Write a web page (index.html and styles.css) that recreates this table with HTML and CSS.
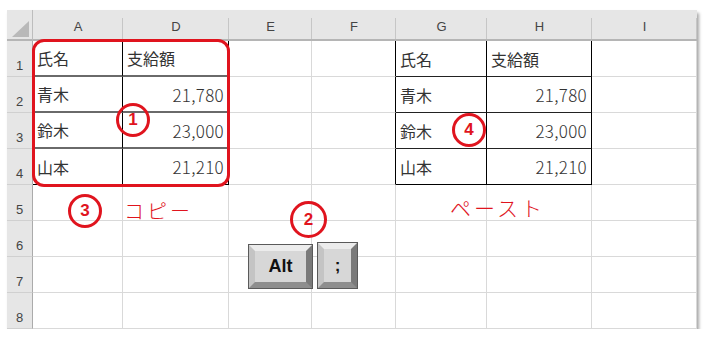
FILE: index.html
```html
<!DOCTYPE html>
<html lang="ja">
<head>
<meta charset="utf-8">
<title>Excel paste</title>
<link rel="stylesheet" href="styles.css">
</head>
<body>
<div class="sheet">
  <div class="grid">
    <div class="corner"><svg class="tri" width="18" height="17" viewBox="0 0 18 17"><polygon points="17,0 17,16 0,16" fill="#b9b9b9"/></svg></div>
    <div class="ch">A</div><div class="ch">D</div><div class="ch">E</div><div class="ch">F</div><div class="ch">G</div><div class="ch">H</div><div class="ch">I</div>

    <div class="rh">1</div>
    <div class="c la lmid">氏名</div><div class="c ld lmid">支給額</div><div class="c"></div><div class="c rf"></div><div class="c rg rmid">氏名</div><div class="c rh2 rmid">支給額</div><div class="c"></div>

    <div class="rh">2</div>
    <div class="c la lmid">青木</div><div class="c ld lmid num">21,780</div><div class="c"></div><div class="c rf"></div><div class="c rg rmid">青木</div><div class="c rh2 rmid num">21,780</div><div class="c"></div>

    <div class="rh">3</div>
    <div class="c la lmid">鈴木</div><div class="c ld lmid num">23,000</div><div class="c"></div><div class="c rf"></div><div class="c rg rmid">鈴木</div><div class="c rh2 rmid num">23,000</div><div class="c"></div>

    <div class="rh">4</div>
    <div class="c la lend">山本</div><div class="c ld lend num">21,210</div><div class="c"></div><div class="c rf"></div><div class="c rg rend">山本</div><div class="c rh2 rend num">21,210</div><div class="c"></div>

    <div class="rh">5</div>
    <div class="c"></div><div class="c"></div><div class="c"></div><div class="c"></div><div class="c"></div><div class="c"></div><div class="c"></div>
    <div class="rh">6</div>
    <div class="c"></div><div class="c"></div><div class="c"></div><div class="c"></div><div class="c"></div><div class="c"></div><div class="c"></div>
    <div class="rh">7</div>
    <div class="c"></div><div class="c"></div><div class="c"></div><div class="c"></div><div class="c"></div><div class="c"></div><div class="c"></div>
    <div class="rh">8</div>
    <div class="c"></div><div class="c"></div><div class="c"></div><div class="c"></div><div class="c"></div><div class="c"></div><div class="c"></div>
  </div>

  <div class="sel"></div>
  <div class="badge b1">1</div>
  <div class="badge b2">2</div>
  <div class="badge b3">3</div>
  <div class="badge b4">4</div>
  <div class="label copy">コピー</div>
  <div class="label paste">ペースト</div>
  <div class="key alt">Alt</div>
  <div class="key semi">;</div>
</div>
</body>
</html>
```

FILE: styles.css
```css
html, body {
  margin: 0;
  padding: 0;
  background: #ffffff;
}

.sheet {
  position: relative;
  margin: 10px 0 0 7px;
  width: 690px;
  height: 319px;
  box-shadow: 2px 3px 3px rgba(0, 0, 0, 0.35);
}

.grid {
  display: grid;
  grid-template-columns: 26px 90px 106px 83px 84px 91px 105px 105px;
  grid-template-rows: 31px repeat(8, 36px);
  background: #ffffff;
}

.grid > div {
  box-sizing: border-box;
}

.corner {
  position: relative;
  background: #e6e6e6;
  border-right: 1px solid #bdbdbd;
  border-bottom: 2px solid #b5b5b5;
}

.tri {
  position: absolute;
  right: 2px;
  bottom: 1px;
}

.ch {
  position: relative;
  background: #e6e6e6;
  border-bottom: 2px solid #b5b5b5;
  font-family: "Liberation Sans", Arial, sans-serif;
  font-size: 13px;
  color: #444;
  display: flex;
  align-items: center;
  justify-content: center;
  padding-top: 4px;
}

.ch::after {
  content: "";
  position: absolute;
  right: 0;
  top: 8px;
  bottom: 0;
  width: 1px;
  background: #c6c6c6;
}

.rh {
  background: #e6e6e6;
  border-right: 1px solid #ababab;
  border-bottom: 1px solid #d0d0d0;
  font-family: "Liberation Sans", Arial, sans-serif;
  font-size: 13px;
  color: #444;
  display: flex;
  align-items: flex-end;
  justify-content: center;
  padding-bottom: 3px;
}

.c {
  border-right: 1px solid #d9d9d9;
  border-bottom: 1px solid #d9d9d9;
  font-family: "Noto Sans CJK JP", "Noto Sans", sans-serif;
  font-size: 16px;
  color: #333;
  display: flex;
  align-items: center;
  padding: 0 4px 0 4px;
  white-space: nowrap;
}

.num {
  justify-content: flex-end;
  font-size: 17px;
  font-weight: 300;
  letter-spacing: 0.3px;
}

/* left (source) table */
.la { border-right: 1px solid #000; }
.ld { border-right: 1px solid #000; }
.lmid { border-bottom: 2px solid #6a6a6a; }
.lend { border-bottom: 1px solid #000; }

/* right (pasted) table */
.rf { border-right: 1px solid #000; }
.rg { border-right: 1px solid #000; }
.rh2 { border-right: 1px solid #000; }
.rmid { border-bottom: 1px solid #222; }
.rend { border-bottom: 1px solid #000; }

/* overlays */
.sel {
  position: absolute;
  left: 25px;
  top: 29px;
  width: 198px;
  height: 148px;
  box-sizing: border-box;
  border: 3px solid #e0141e;
  border-radius: 12px;
}

.badge {
  position: absolute;
  width: 34px;
  height: 34px;
  box-sizing: border-box;
  border: 3px solid #e0141e;
  border-radius: 50%;
  color: #e0141e;
  font-family: "Liberation Sans", Arial, sans-serif;
  font-weight: bold;
  font-size: 17px;
  display: flex;
  align-items: center;
  justify-content: center;
}

.b1 { left: 109px; top: 93px; }
.b2 { left: 283px; top: 191px; width: 37px; height: 37px; }
.b3 { left: 61px; top: 184px; }
.b4 { left: 445px; top: 103px; }

.label {
  position: absolute;
  color: #e0141e;
  font-family: "Noto Sans CJK JP", sans-serif;
  font-size: 20px;
  font-weight: 300;
  letter-spacing: 3px;
  line-height: 1;
}

.copy { left: 117px; top: 191px; }
.paste { left: 443px; top: 187px; font-size: 21px; }

.key {
  position: absolute;
  box-sizing: border-box;
  background: #d7d7d7;
  border-style: solid;
  border-width: 6px;
  border-color: #ececec #7a7a7a #8e8e8e #c4c4c4;
  box-shadow: 0 0 0 1px #5a5a5a;
  font-family: "Liberation Sans", Arial, sans-serif;
  font-weight: bold;
  color: #111;
  display: flex;
  align-items: center;
  justify-content: center;
}

.alt {
  left: 242px;
  top: 235px;
  width: 63px;
  height: 43px;
  font-size: 18px;
}

.semi {
  left: 311px;
  top: 233px;
  width: 39px;
  height: 45px;
  font-size: 17px;
}
```
